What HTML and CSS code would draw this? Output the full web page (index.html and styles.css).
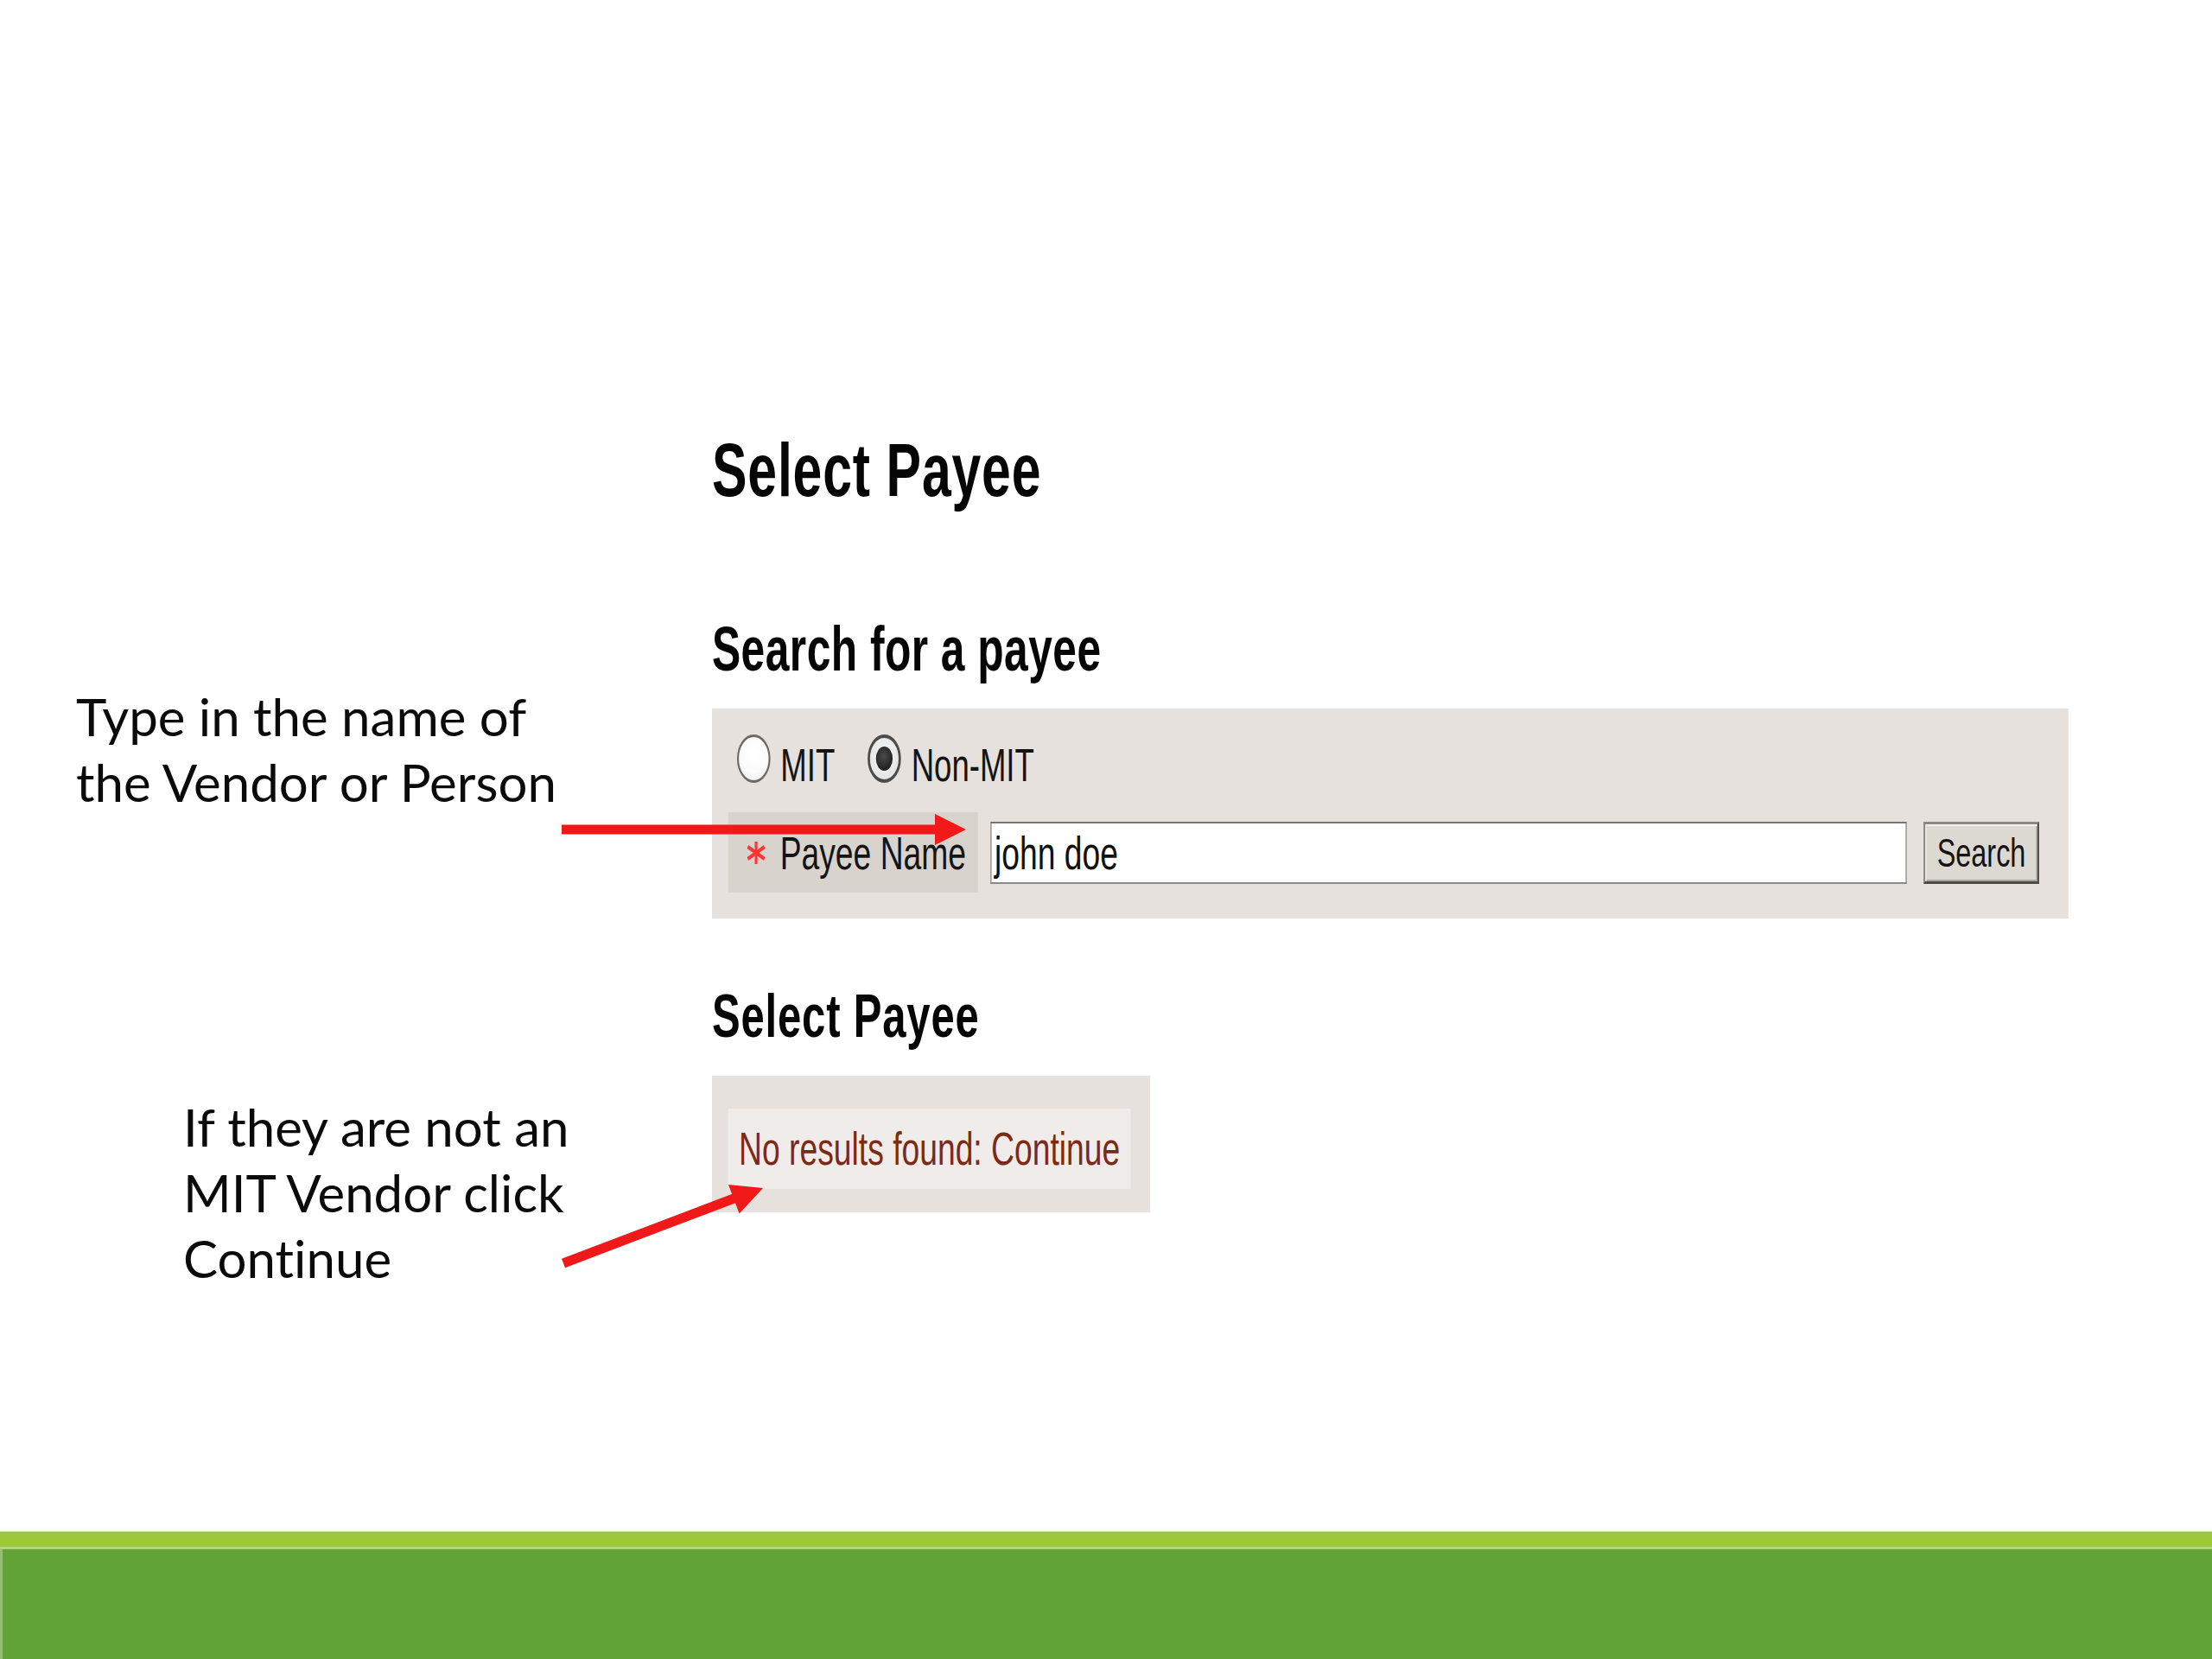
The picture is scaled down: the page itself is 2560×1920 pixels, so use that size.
FILE: index.html
```html
<!DOCTYPE html>
<html lang="en">
<head>
<meta charset="utf-8">
<title>Select Payee</title>
<link rel="stylesheet" href="styles.css">
</head>
<body>
<div class="slide">
  <div class="main">
    <div class="notes">
      <p class="note note-type">Type in the name of<br>the Vendor or Person</p>
      <p class="note note-continue">If they are not an<br>MIT Vendor click<br>Continue</p>
    </div>
    <div class="shot-frame">
      <div class="shot">
        <h1 class="page-title">Select Payee</h1>
        <h2 class="section-title search-title">Search for a payee</h2>
        <div class="panel search-panel">
          <div class="radio-row">
            <span class="radio"></span><span class="radio-label">MIT</span>
            <span class="radio checked"></span><span class="radio-label">Non-MIT</span>
          </div>
          <div class="field-row">
            <div class="field-label">
              <svg class="req" width="36" height="28" viewBox="0 0 36 28" aria-label="required">
                <line x1="18" y1="1" x2="18" y2="27" stroke="#ff3434" stroke-width="4.5"/>
                <line x1="4" y1="7" x2="32" y2="21" stroke="#ff3434" stroke-width="4.5"/>
                <line x1="4" y1="21" x2="32" y2="7" stroke="#ff3434" stroke-width="4.5"/>
              </svg>
              <span class="field-name">Payee Name</span>
            </div>
            <div class="text-input"><span class="input-value">john doe</span></div>
            <div class="button">Search</div>
          </div>
        </div>
        <h2 class="section-title results-title">Select Payee</h2>
        <div class="panel results-panel">
          <div class="results-msg">No results found: Continue</div>
        </div>
      </div>
    </div>
  </div>
  <div class="footer">
    <div class="footer-light"></div>
    <div class="footer-dark"></div>
  </div>
  <svg class="arrows" width="2560" height="1920" viewBox="0 0 2560 1920" aria-hidden="true">
    <line x1="650" y1="960" x2="1088" y2="960" stroke="#f01818" stroke-width="11"/>
    <polygon points="1082,942 1118,960 1082,978" fill="#f01818"/>
    <line x1="652" y1="1462" x2="852" y2="1386" stroke="#f01818" stroke-width="11"/>
    <polygon points="855.6,1404.5 883,1375 843,1370.9" fill="#f01818"/>
  </svg>
</div>
</body>
</html>
```

FILE: styles.css
```css
html, body {
  margin: 0;
  padding: 0;
  background: #ffffff;
}

body {
  overflow: hidden;
}

.slide {
  position: relative;
  width: 2560px;
  height: 1920px;
  display: flex;
  flex-direction: column;
  overflow: hidden;
  background: #ffffff;
}

.main {
  flex: 1;
  display: flex;
  padding-top: 494px;
  overflow: hidden;
}

/* ---------- annotations ---------- */
.notes {
  flex: none;
  width: 824px;
  display: flex;
  flex-direction: column;
}

.note {
  margin: 0;
  font-family: Lato, "Open Sans", sans-serif;
  font-size: 60px;
  line-height: 76px;
  font-variant-ligatures: none;
  color: #0a0a0a;
  white-space: nowrap;
}

.note-type {
  margin-top: 297px;
  margin-left: 88px;
}

.note-continue {
  margin-top: 323px;
  margin-left: 212px;
}

/* ---------- screenshot (horizontally squished) ---------- */
.shot-frame {
  flex: none;
  width: 1570px;
}

.shot {
  width: 2275px;
  transform: scaleX(0.69);
  transform-origin: 0 0;
  font-family: "Liberation Sans", Arial, sans-serif;
  color: #111111;
}

.page-title {
  margin: 0;
  font-size: 88px;
  line-height: 100px;
  font-weight: 700;
  letter-spacing: 1.2px;
  color: #050505;
}

.section-title {
  margin: 115px 0 0 0;
  font-size: 72px;
  line-height: 84px;
  font-weight: 700;
  color: #050505;
}

.search-title {
  letter-spacing: 0.7px;
}

.results-title {
  margin-top: 71px;
  font-size: 71px;
  letter-spacing: 1.2px;
}

.panel {
  background: #e6e1dc;
  margin-top: 27px;
}

.search-panel {
  padding: 30px 49px 30px 27px;
}

.radio-row {
  display: flex;
  align-items: flex-start;
  margin-left: 15px;
  height: 64px;
}

.radio {
  box-sizing: border-box;
  width: 56px;
  height: 56px;
  border-radius: 50%;
  border: 3px solid #6c6a68;
  background: radial-gradient(circle at 50% 40%, #ffffff 0%, #fbfbfb 55%, #e4e4e4 100%);
  display: flex;
  align-items: center;
  justify-content: center;
}

.radio.checked {
  margin-left: 55px;
  border: 4px solid #4e4c4a;
  background: radial-gradient(circle at 50% 45%, #f6f6f6 0%, #e6e6e6 70%, #cfcfcf 100%);
}

.radio.checked::after {
  content: "";
  width: 28px;
  height: 28px;
  border-radius: 50%;
  background: radial-gradient(circle at 45% 40%, #4a4a4a 0%, #222222 70%);
}

.radio-label {
  margin-left: 17px;
  padding-top: 8px;
  font-size: 53px;
  line-height: 56px;
  color: #141414;
}

.field-row {
  display: flex;
  align-items: center;
  margin-top: 26px;
}

.field-label {
  box-sizing: border-box;
  flex: none;
  width: 419px;
  height: 93px;
  background: #d8d3cd;
  display: flex;
  align-items: center;
  padding-left: 29px;
}

.req {
  flex: none;
  display: block;
}

.field-name {
  margin-left: 22px;
  font-size: 54px;
  line-height: 62px;
  color: #141414;
}

.text-input {
  flex: 1;
  box-sizing: border-box;
  height: 72px;
  margin-left: 21px;
  background: #ffffff;
  border: 2px solid #8f8b87;
  border-top-color: #7a7672;
  display: flex;
  align-items: center;
  padding-left: 5px;
}

.input-value {
  font-size: 54px;
  line-height: 62px;
  color: #111111;
}

.button {
  box-sizing: border-box;
  flex: none;
  width: 194px;
  height: 72px;
  margin-left: 28px;
  background: #dcd8d2;
  border: 3px solid;
  border-color: #8c8884 #4e4b48 #4e4b48 #8c8884;
  box-shadow: inset 2px 2px 0 #f3f1ee, inset -2px -2px 0 #a9a5a0;
  display: flex;
  align-items: center;
  justify-content: center;
  font-size: 47px;
  line-height: 56px;
  color: #141414;
}

.results-panel {
  width: fit-content;
  padding: 38px 33px 27px 27px;
}

.results-msg {
  height: 93px;
  padding: 0 18px;
  background: #efece9;
  font-size: 54px;
  line-height: 93px;
  color: #7c2a17;
  white-space: nowrap;
}

/* ---------- footer bar ---------- */
.footer {
  flex: none;
  height: 148px;
  display: flex;
  flex-direction: column;
}

.footer-light {
  height: 17px;
  background: #9bc83a;
  border-top: 1px solid #c9e19a;
  border-bottom: 3px solid #b3d777;
}

.footer-dark {
  flex: 1;
  background: #62a338;
  border-left: 3px solid #93c073;
}

/* ---------- annotation arrows ---------- */
.arrows {
  position: absolute;
  left: 0;
  top: 0;
  pointer-events: none;
}
```
